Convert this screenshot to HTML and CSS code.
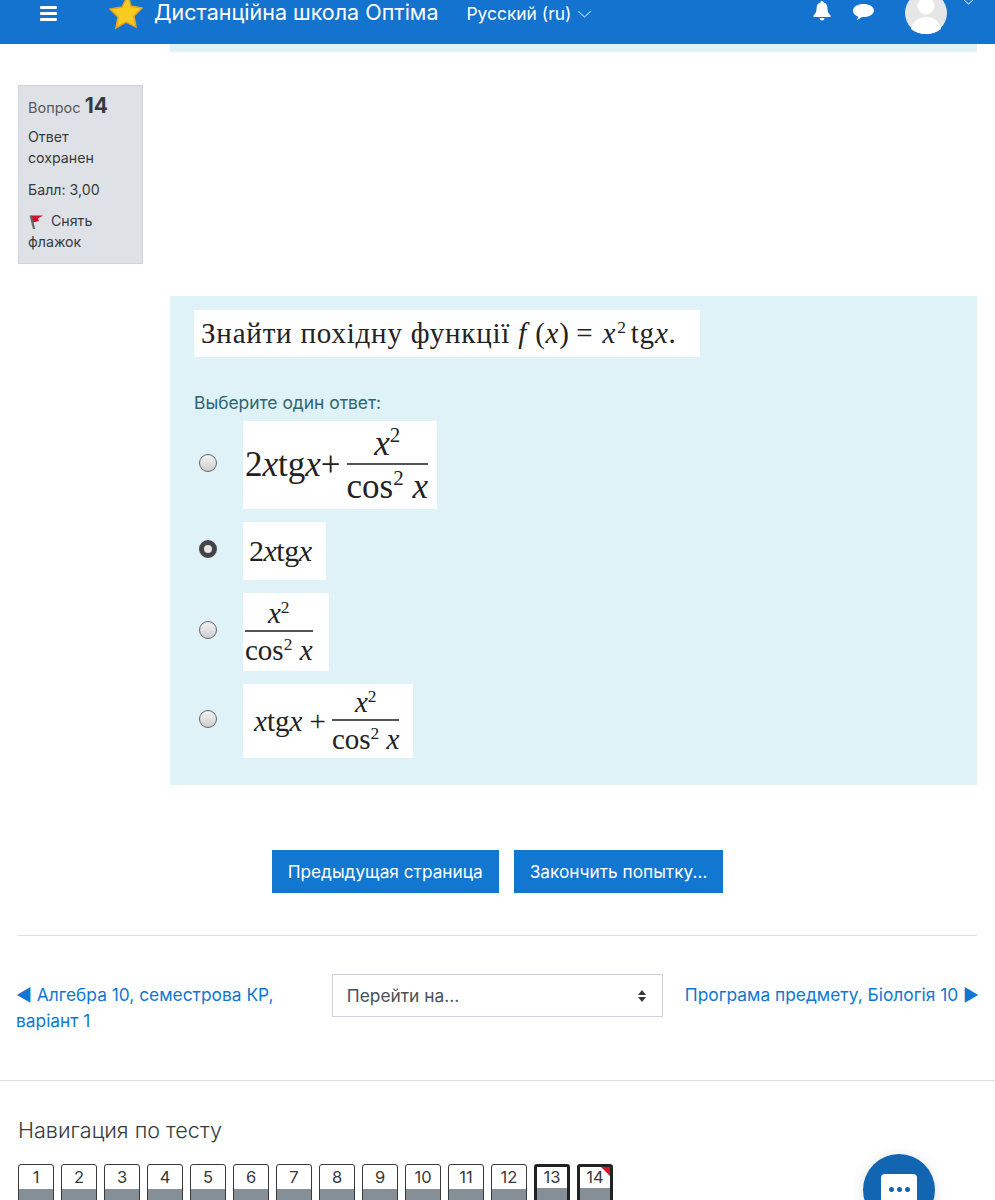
FILE: index.html
```html
<!DOCTYPE html>
<html lang="ru">
<head>
    <meta charset="UTF-8">
    <meta name="viewport" content="width=device-width, initial-scale=1.0">
    <title>Вопрос 14</title>
    <link rel="stylesheet" href="styles.css">
</head>
<body>
    <header class="navbar">
        <div class="menu-icon"><span></span><span></span><span></span></div>
        <svg class="star" width="34" height="36" viewBox="0 0 34 36">
            <polygon points="19,0 22,11 33,13 25,21 27,32 17,27 7,33 9,22 1,14 13,12" fill="#f7cc1f" stroke="#e9a01c" stroke-width="1.5"/>
        </svg>
        <div class="site-name">Дистанційна школа Оптіма</div>
        <div class="lang">Русский (ru)
            <svg width="15" height="8" viewBox="0 0 15 8"><path d="M1 1l6.500 6L14 1" fill="none" stroke="#fff"/></svg>
        </div>
        <div class="nav-right">
            <svg class="bell" width="18" height="20" viewBox="0 0 18 20"><path d="M9 0c1 0 1.500.7 1.500 1.600C13.500 2.300 14.500 5 14.500 8c0 3.500 1.500 5 3 6.500V16H.5v-1.500C2 13 3.500 11.500 3.500 8c0-3 1-5.700 4-6.400C7.500.7 8 0 9 0zM6.500 17h5c0 1.500-1 2.500-2.500 2.500S6.500 18.500 6.500 17z" fill="#fff"/></svg>
            <svg class="bubble" width="21" height="16" viewBox="0 0 21 16"><path d="M10.500 0C16 0 21 2.700 21 6.500S16 13 11 13c-2 0-3 .5-4 1.300-1 .8-2.300 1.500-3.500 1.700 1-1 1.500-2 1.500-3.600C2 11.500 0 9.500 0 6.500 0 2.700 5 0 10.500 0z" fill="#fff"/></svg>
            <svg class="avatar" width="42" height="42" viewBox="0 0 42 42">
                <circle cx="21" cy="21" r="21" fill="#e6e6e6"/>
                <circle cx="21" cy="14" r="8.500" fill="#fff"/>
                <path d="M6 37c2-9 8-12 15-12s13 3 15 12c-4 3.500-9 5-15 5s-11-1.500-15-5z" fill="#fff"/>
            </svg>
            <svg class="user-chevron" width="15" height="8" viewBox="0 0 15 8"><path d="M1 1l6.500 6L14 1" fill="none" stroke="#fff"/></svg>
        </div>
    </header>

    <div class="prev-strip"></div>

    <div class="question-info">
        <h3 class="question-no">Вопрос <span>14</span></h3>
        <p>Ответ сохранен</p>
        <p>Балл: 3,00</p>
        <p class="flag-line">
            <svg width="16" height="15" viewBox="0 0 16 15">
                <path d="M3 1.500h12l-5 3 1 2.500-6.500 1.500z" fill="#c8142d"/>
                <path d="M1.500 1.500L5 15h2.200L3.800 1.500z" fill="#666"/>
            </svg>
            Снять флажок
        </p>
    </div>

    <form class="formulation">
        <div class="task">Знайти похідну функції <i>f</i> (<i>x</i>)&thinsp;= <i class="task-x">x</i><sup>2</sup>tg<i>x</i>.</div>
        <div class="prompt">Выберите один ответ:</div>
        <div class="answers">
            <label class="answer">
                <input type="radio" name="q14">
                <span class="math math-a"><span>2<i>x</i>tg<i>x</i>+</span>
                    <span class="frac"><span class="num"><i>x</i><sup>2</sup></span><span class="den">cos<sup>2</sup> <i>x</i></span></span>
                </span>
            </label>
            <label class="answer">
                <input type="radio" name="q14" checked>
                <span class="math math-b">2<i>x</i>tg<i>x</i></span>
            </label>
            <label class="answer">
                <input type="radio" name="q14">
                <span class="math math-c">
                    <span class="frac"><span class="num"><i>x</i><sup>2</sup></span><span class="den">cos<sup>2</sup> <i>x</i></span></span>
                </span>
            </label>
            <label class="answer">
                <input type="radio" name="q14">
                <span class="math math-d"><span><i>x</i>tg<i>x</i> +</span>
                    <span class="frac"><span class="num"><i>x</i><sup>2</sup></span><span class="den">cos<sup>2</sup> <i>x</i></span></span>
                </span>
            </label>
        </div>
    </form>

    <div class="submit-row">
        <button type="button" class="btn">Предыдущая страница</button>
        <button type="button" class="btn">Закончить попытку...</button>
    </div>

    <hr class="rule">

    <div class="activity-nav">
        <a class="prev-link" href="#">◀ Алгебра 10, семестрова КР, варіант 1</a>
        <div class="jump">Перейти на...
            <svg width="10" height="14" viewBox="0 0 10 14"><path d="M5 1l4 5H1zM5 13L1 8h8z" fill="#373a3c"/></svg>
        </div>
        <a class="next-link" href="#">Програма предмету, Біологія 10 ▶</a>
    </div>

    <hr class="rule-full">

    <section class="quiz-nav">
        <h2>Навигация по тесту</h2>
        <div class="quiz-buttons">
            <a class="qn">1</a><a class="qn">2</a><a class="qn">3</a><a class="qn">4</a><a class="qn">5</a>
            <a class="qn">6</a><a class="qn">7</a><a class="qn">8</a><a class="qn">9</a><a class="qn">10</a>
            <a class="qn">11</a><a class="qn">12</a><a class="qn current">13</a><a class="qn current flagged">14</a>
        </div>
    </section>

    <div class="chat-button">
        <div class="chat-inner"><span></span><span></span><span></span></div>
    </div>
</body>
</html>
```

FILE: styles.css
```css
/* Page */
html, body {
    height: 1200px;
    overflow: hidden;
}

body {
    margin: 0;
    font-family: "Inter", "Liberation Sans", sans-serif;
    font-size: 16px;
    color: #373a3c;
    background-color: #fff;
}

/* Top bar */
.navbar {
    display: flex;
    height: 43px;
    overflow: hidden;
    color: #fff;
    background-color: #1473ce;
    border-bottom: 1px solid #1177d1;
}

.menu-icon {
    display: flex;
    flex-direction: column;
    gap: 3px;
    width: 17px;
    margin: 6px 0 0 40px;
}

.menu-icon span {
    height: 3px;
    border-radius: 1px;
    background-color: #fff;
}

.star {
    flex: none;
    margin: -5px 0 0 52px;
}

.site-name {
    margin: -2px 0 0 11px;
    font-size: 21.500px;
    line-height: 28px;
    white-space: nowrap;
}

.lang {
    display: flex;
    align-items: center;
    gap: 6px;
    height: 27px;
    margin-left: 28px;
    font-size: 17.400px;
    white-space: nowrap;
}

.nav-right {
    display: flex;
    align-items: flex-start;
    margin-left: auto;
}

.bell {
    margin-top: 1px;
}

.bubble {
    margin: 4px 0 0 22px;
}

.avatar {
    margin: -8px 0 0 31px;
}

.user-chevron {
    margin: -3px 19px 0 14px;
}

.prev-strip {
    height: 8px;
    margin: 0 18px 0 170px;
    background-color: #def2f8;
}

/* Question info box */
.question-info {
    width: 105px;
    height: 158px;
    margin: 33px 0 0 18px;
    padding: 9px 9px 10px 9px;
    font-size: 14.200px;
    line-height: 21px;
    background-color: #dee2e6;
    border: 1px solid #ced4da;
}

.question-no {
    margin: 0 0 7px;
    font-size: 14.500px;
    font-weight: 400;
    line-height: 22px;
    color: #55595c;
}

.question-no span {
    font-size: 21px;
    font-weight: 700;
    color: #373a3c;
}

.question-info p {
    margin: 0 0 11px;
}

.question-info p:nth-of-type(2) {
    margin-bottom: 10px;
}

.flag-line svg {
    vertical-align: -3px;
    margin-right: 3px;
}

/* Question body */
.formulation {
    height: 489px;
    margin: 32px 18px 0 170px;
    padding: 14px 24px;
    box-sizing: border-box;
    color: #2f6473;
    background-color: #def2f8;
}

.task {
    width: 506px;
    height: 47px;
    box-sizing: border-box;
    padding-left: 7px;
    font-family: "Liberation Serif", serif;
    font-size: 29px;
    line-height: 46px;
    letter-spacing: 0.800px;
    white-space: nowrap;
    color: #222;
    background-color: #fff;
}

.task-x {
    margin-left: 1px;
}

.task sup,
.math sup {
    font-size: 60%;
    line-height: 0;
    vertical-align: 0.600em;
}

.task sup {
    margin: 0 4px 0 1px;
}

.prompt {
    margin-top: 35px;
    font-size: 17.400px;
    line-height: 21px;
}

.answers {
    display: flex;
    flex-direction: column;
    gap: 13px;
    margin-top: 8px;
}

.answer {
    display: flex;
    align-items: center;
}

.answer input {
    appearance: none;
    flex: none;
    width: 18px;
    height: 18px;
    margin: 0 26px 5px 5px;
    border: 1px solid #666;
    border-radius: 50%;
    background: linear-gradient(#f2f2f2, #cfcfcf);
}

.answer input:checked {
    border: 5px solid #444;
    background: #e4e4e4;
}

/* Formula pictures */
.math {
    display: flex;
    align-items: center;
    box-sizing: border-box;
    font-family: "Liberation Serif", serif;
    color: #222;
    background-color: #fff;
    white-space: nowrap;
}

.frac {
    display: inline-flex;
    flex-direction: column;
    align-items: center;
}

.num {
    line-height: 1;
    padding-bottom: 2px;
    border-bottom: 2px solid #555;
    align-self: stretch;
    text-align: center;
}

.den {
    line-height: 1;
    padding-top: 4px;
}

.math-a {
    width: 194px;
    height: 88px;
    padding-left: 2px;
    font-size: 35px;
}

.math-a .frac {
    margin-left: 6px;
}

.math-b {
    width: 83px;
    height: 58px;
    padding-left: 6px;
    font-size: 30px;
    letter-spacing: -0.500px;
}

.math-c {
    width: 86px;
    height: 78px;
    padding-left: 2px;
    font-size: 29px;
}

.math-d {
    width: 170px;
    height: 74px;
    padding-left: 11px;
    font-size: 29px;
}

.math-d .frac {
    margin-left: 6px;
}

/* Buttons under the question */
.submit-row {
    display: flex;
    justify-content: center;
    gap: 15px;
    margin-top: 65px;
}

.btn {
    height: 43px;
    padding: 0 16px;
    font-family: inherit;
    font-size: 17.250px;
    color: #fff;
    background-color: #1177d1;
    border: none;
}

.rule {
    height: 1px;
    margin: 42px 18px 0;
    background-color: #dedede;
    border: none;
}

/* Previous / next activity */
.activity-nav {
    display: flex;
    align-items: flex-start;
    margin: 38px 16px 0;
    font-size: 17.350px;
    line-height: 26px;
}

.activity-nav a {
    color: #1177d1;
    text-decoration: none;
}

.prev-link {
    width: 280px;
    margin: 8px 37px 0 0;
}

.next-link {
    margin: 8px 0 0 22px;
    white-space: nowrap;
}

.jump {
    display: flex;
    flex: none;
    align-items: center;
    justify-content: space-between;
    width: 331px;
    height: 43px;
    box-sizing: border-box;
    padding: 0 15px 0 14px;
    color: #495057;
    border: 1px solid #ced4da;
}

.rule-full {
    height: 1px;
    margin: 46px 0 0;
    background-color: #dedede;
    border: none;
}

/* Quiz navigation */
.quiz-nav {
    padding: 35px 18px 0;
}

.quiz-nav h2 {
    margin: 0;
    font-size: 21.600px;
    font-weight: 300;
    line-height: 28px;
}

.quiz-buttons {
    display: flex;
    gap: 7px;
    margin-top: 20px;
}

.qn {
    position: relative;
    width: 36px;
    height: 46px;
    box-sizing: border-box;
    overflow: hidden;
    font-size: 16.500px;
    line-height: 24px;
    text-align: center;
    color: #373a3c;
    background: linear-gradient(#fff 24px, #868e96 24px);
    border: 1px solid #373a3c;
    border-radius: 3px;
}

.qn.current {
    line-height: 20px;
    background: linear-gradient(#fff 21px, #868e96 21px);
    border: 3px solid #222;
}

.qn.flagged::after {
    content: "";
    position: absolute;
    top: 0;
    right: 0;
    border-style: solid;
    border-width: 0 9px 9px 0;
    border-color: transparent #d8132a transparent transparent;
}

/* Chat button */
.chat-button {
    position: fixed;
    top: 1154px;
    left: 863px;
    display: flex;
    justify-content: center;
    width: 72px;
    height: 72px;
    border-radius: 50%;
    background-color: #1265b1;
    box-shadow: 0 2px 14px rgba(0, 0, 0, 0.12);
}

.chat-inner {
    display: flex;
    justify-content: center;
    gap: 3px;
    width: 36px;
    height: 36px;
    box-sizing: border-box;
    margin-top: 20px;
    padding-top: 13px;
    border-radius: 4px;
    background-color: #fff;
}

.chat-inner span {
    width: 5px;
    height: 5px;
    border-radius: 50%;
    background-color: #1265b1;
}
```
